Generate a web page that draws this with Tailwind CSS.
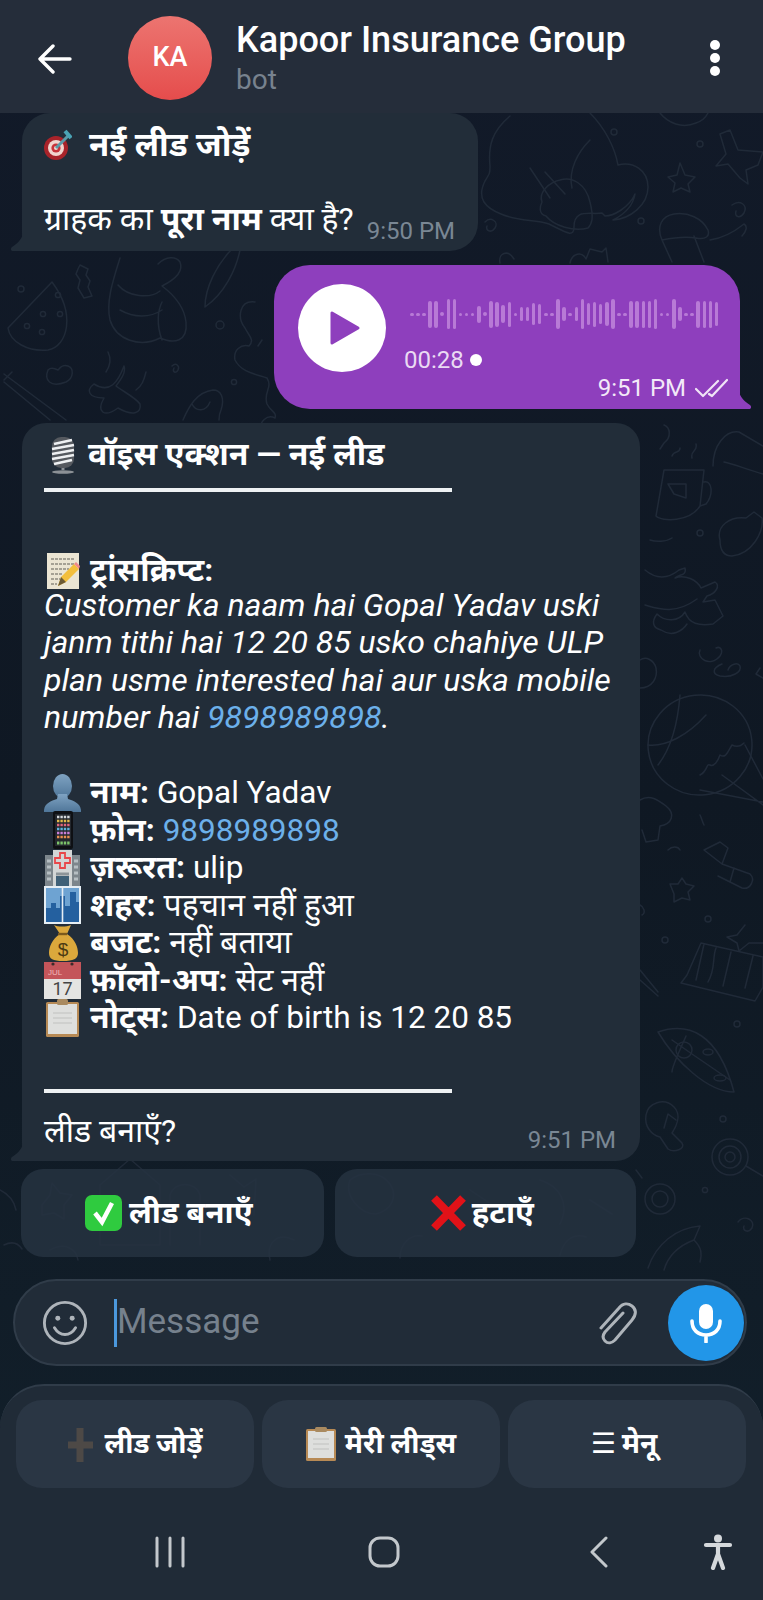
<!DOCTYPE html>
<html lang="hi">
<head>
<meta charset="UTF-8">
<title>Kapoor Insurance Group</title>
<script src="https://cdn.jsdelivr.net/npm/@tailwindcss/browser@4"></script>
</head>
<body class="bg-[#0f1821]">
<div class="relative w-[763px] h-[1600px] overflow-hidden flex flex-col text-white bg-gradient-to-b from-[#121a29] via-[#0f1823] to-[#12202b] font-['Roboto','Noto_Sans_Devanagari','Noto_Sans_CJK_SC','DejaVu_Sans',sans-serif]">

  <!-- wallpaper doodles, coordinates are page pixels -->
  <svg class="absolute left-0 top-0" width="763" height="1380" fill="none" stroke="#202a38" stroke-width="1.5" stroke-linecap="round" stroke-linejoin="round">
    <!-- top right: witch hat, stars, jar -->
    <path d="M590 113c15 15 25 35 28 52 15-4 30 5 30 22 0 18-18 32-35 33 12-6 20-14 22-26-6 14-22 22-30 22l-3-3c-12 2-28-5-28 14 0 12-10 4-25-3-14-5-30-2-48-10-15-6-25-15-16-33 5-8 5-8 5-15-2-20 2-35 20-50"/>
    <path d="M590 140c-12 12-22 30-18 48M545 172l20 22M530 168l20 30"/>
    <path d="M560 180c12-4 26 4 30 22 4 16 2 22-2 26-14 4-34-2-42-12-8-2-6-10-4-14-4-10 8-20 18-22z"/>
    <path d="M730 130l8 20 25 2-5 13-12 5 2 14-8-6-12-14-12 2 10-12-6-20zM680 163l5 12 10 2-7 7 2 8-9-4-8 4 2-9-7-6 9-2z"/>
    <path d="M660 113c8 10 22 16 36 10 6-2 10-6 12-10"/><circle cx="614" cy="132" r="3"/><circle cx="700" cy="144" r="3"/><circle cx="641" cy="221" r="3"/>
    <path d="M732 205c8-6 16 0 12 8-4 6-10 4-8-2"/><path d="M485 222c6-6 14 0 10 6-4 6-10 2-8-2"/>
    <path d="M662 240c-6-14 0-24 12-26 14-2 28 4 34 16 2 6-2 10-12 8-12-2-24 0-34 2zM662 240l10 22M694 236l10 26M710 240c14-2 24-8 34-16 4 2 2 8-2 12"/>
    <path d="M500 263c-2-10 8-14 14-4M570 263c2-10 12-12 16-4l4-10 12 3 4-4 2 14"/>
    <!-- left column under the first bubble -->
    <path d="M52 282l-44 46c2 14 20 24 40 22 20-4 28-36 4-68z"/><circle cx="27" cy="326" r="2.6"/><circle cx="43" cy="314" r="2.6"/><circle cx="60" cy="314" r="2.6"/><circle cx="58" cy="295" r="2.6"/><circle cx="42" cy="332" r="2.6"/>
    <path d="M80 265l8 4-2 6 4 6-2 6 4 9-8 2-6-10 2-8-4-6 2-5z"/><circle cx="21" cy="289" r="3"/>
    <path d="M120 258c-8 25-14 45-10 62 6 20 30 28 50 18 14 6 28 4 26-16-2-18-16-30-24-36 12-6 22-14 18-24-4-6-14-6-22 2M118 285c10 12 32 14 42 6M120 310c14 8 30 8 42 0M162 340c-6-16-4-30 0-38"/>
    <path d="M240 250c-4 20-16 44-35 57 0-20 12-42 26-57"/><circle cx="220" cy="325" r="4"/>
    <path d="M255 302c-16-2-18 16-10 26 4 8 10 12 4 18-8-2-16 4-14 14 6 12 20 14 32 18 6 10-4 14 0 26 4 8 10 8 8 14-8-4-16 4-14 12M262 340l-4 6"/><circle cx="234" cy="382" r="2.6"/>
    <path d="M48 370c-4 10 2 18 18 12 8-4 8-14 2-16-6-2-8 2-10 4-4-2-8-2-10 0zM4 374l62 46M12 372l-8 8M4 382l46 38"/>
    <path d="M108 352c4 8 2 14-2 20M124 366c-6 16-14 28-30 18-8 6-6 14 10 14-8 14 0 20 14 10 14 8 24 6 22-4-4-6-16-12-24-18 6-8 10-14 8-20zM146 372c-2 8-4 14-10 18"/>
    <path d="M172 366c4-4 8 0 6 4-2 4-6 2-4-2"/><path d="M183 420c6-14 14-28 30-30 8 0 12 8 8 20-2 4-2 8-2 10M192 404c4 8 14 8 18-2"/>
    <!-- right column beside the card -->
    <path d="M713 466c0-20 12-36 26-34l24 14M724 462c10 2 24 8 39 12"/><path d="M664 425c6 2 8 12 0 18l-4 6"/>
    <path d="M664 470h40l-4 36c-10 16-38 16-44 10zM704 482c8-2 10 12 2 22l-6 2M668 484h18v14l-12-4zM672 456c2-6 8-2 8-8M692 458c-2-8 6-6 4-14"/>
    <path d="M720 540c-4-14 10-24 26-22l8-6 8 6c2 14-10 36-30 38-10 0-12-8-12-16z"/><circle cx="700" cy="533" r="3"/>
    <path d="M650 540c6 2 16 2 22-2"/>
    <path d="M645 570c12 10 24 8 34 0l6-2c2 8-6 6-10 10 10-4 22 2 26 10l14-6c6 4 0 12-8 14l-4 6 12-2 8 16-10 8c-14 2-24 0-28-12-6 10-20 10-28 2-6 8-4 14 4 16 12 8 22 0 26-6M645 605c14 4 30 10 52-6M700 650c-4 8 10 18 20 6 4-6 0-10-4-8"/>
    <path d="M640 660c6-4 14 0 16 8 2 10-4 20-16 20"/>
    <path d="M728 670c2-6 10-8 12-4 2 6-8 12-20 10-8-2-8-8 2-12"/>
    <path d="M760 668l-4 6 7 4"/>
    <ellipse cx="700" cy="745" rx="52" ry="50" transform="rotate(-6 700 745)"/><path d="M680 695c-2 26-8 52-22 70M648 745c18 2 40-10 58-30M700 775c8-4 6-12 10-10s8-4 10-10c6 4 8-4 12-10 4 2 8 2 12-2M700 790l63 12M722 775l41 30M745 745l18 34"/>
    <path d="M640 800c10-6 18 0 26 6 10 8 6 18-6 20l-2 14-12 2-4-12"/><path d="M668 850c4-4 10-4 12 0M700 815c2 4 2 6 4 10"/><path d="M670 884l8 0 4-6 4 6 8 2-6 6 2 8-8-2-8 4 0-8z"/>
    <path d="M704 850l16-8 8 6-6 16zM722 864l28 10c6 6 0 16-8 14l-24-12M734 868l-4 14"/>
    <path d="M640 905c4 2 6 8 2 10"/><circle cx="708" cy="919" r="3"/><circle cx="665" cy="940" r="3"/>
    <path d="M745 925l-8 10-10 2 10 6 2 8 10-8 14 0"/>
    <path d="M687 975l14-32 62 14v30l-8 14-74-18zM704 944l-8 36M716 948c-4 10 0 20-8 34M731 952l-8 34M753 956l-8 32"/><path d="M640 970l18 22M640 980l18 16"/>
    <path d="M658 1032c30-10 60 0 76 60-26 0-58-30-76-60zM686 1036c-6 14-14 30-14 36M672 1040l20 14 38 26"/><circle cx="684" cy="1050" r="8"/><ellipse cx="708" cy="1052" rx="5" ry="3"/><ellipse cx="720" cy="1078" rx="6" ry="3"/>
    <circle cx="737" cy="1024" r="3"/>
    <path d="M646 1115c2-12 18-18 28-8 8 8 2 20-2 26l10 10c4 6-8 10-14 6l-8-12c-8-2-16-10-14-22zM664 1128l4-14 8 6"/>
    <circle cx="723" cy="1119" r="3"/><circle cx="730" cy="1157" r="18"/><circle cx="730" cy="1157" r="11"/><circle cx="730" cy="1157" r="5"/><path d="M746 1166l17 10"/>
    <circle cx="660" cy="1199" r="15"/><circle cx="660" cy="1199" r="8"/><circle cx="705" cy="1190" r="2.6"/><path d="M738 1222c6-8 18-2 14 6-4 6-10 2-8-2"/>
    <path d="M648 1268c8-24 28-40 52-42l-6 14c8 8 8 14 6 22M664 1270c4-14 14-24 30-30"/>
    <!-- seen through the inline buttons -->
    <path d="M42 1205l8-10 2-12 8 10 12 2-8 10 0 14-10-6-12 2zM100 1185l30-26 30 26v60h-60zM170 1245v-50c4-14 26-14 30 0v50M230 1175l14 12 12-8-2 36M50 1250c14-8 26-2 28 10M270 1260c-4-18 8-28 24-20"/>
    <path d="M350 1180c10-8 30-10 40 4 8 12 2 26-14 30-16 0-32-18-26-34zM470 1190l60 40M540 1180c20 6 30 24 20 44M590 1200l22 14M560 1255c4-16 14-22 26-18M400 1258c0-14 10-24 22-22"/>
    <path d="M0 1190c8 4 14 10 16 20M4 1245c8-4 14-2 18 4M636 1170l6 8"/>
  </svg>

  <!-- header -->
  <header class="relative z-10 h-[113px] shrink-0 bg-[#252d3a] flex items-center">
    <svg class="ml-[38px] mt-[5px]" width="34" height="30" viewBox="0 0 34 30" fill="none" stroke="#fff" stroke-width="3.4" stroke-linecap="round" stroke-linejoin="round"><path d="M2 15h30M15 2 2 15l13 13"/></svg>
    <div class="ml-[56px] mt-[2px] w-[84px] h-[84px] rounded-full bg-gradient-to-b from-[#ec7470] to-[#e54c4c] flex items-center justify-center text-[27px] font-medium">KA</div>
    <div class="ml-[24px] flex-1 self-start pt-[18px]">
      <div class="text-[36px] leading-[44px] font-medium">Kapoor Insurance Group</div>
      <div class="text-[28px] leading-[35px] text-[#78828e]">bot</div>
    </div>
    <div class="mr-[43px] mt-[2px] flex flex-col gap-[3px]">
      <i class="block w-[10px] h-[10px] rounded-full bg-white"></i><i class="block w-[10px] h-[10px] rounded-full bg-white"></i><i class="block w-[10px] h-[10px] rounded-full bg-white"></i>
    </div>
  </header>

  <!-- chat -->
  <main class="relative flex-1 flex flex-col">
    <!-- bot prompt -->
    <div class="relative ml-[22px] w-[456px] h-[138px] bg-[#222d39] rounded-[28px] rounded-bl-none">
      <svg class="absolute left-[-11px] bottom-0" width="12" height="18" viewBox="0 0 12 18"><path d="M12 0v18H2c-2 0-3-2-1-4 6-4 10-8 11-14z" fill="#222d39"/></svg>
      <div class="absolute left-[22px] top-[14px] flex items-center">
        <svg width="28" height="34" viewBox="0 0 28 34"><circle cx="12" cy="20" r="12" fill="#a8232a"/><circle cx="12" cy="20" r="8" fill="#f1d5cf"/><circle cx="12" cy="20" r="4.6" fill="#c7333a"/><circle cx="12" cy="20" r="2" fill="#f1d5cf"/><path d="M12 20 25 7" stroke="#5b9aa8" stroke-width="3"/><path d="m21 3 6 7" stroke="#4aa3b5" stroke-width="4"/></svg>
        <span class="ml-[17px] text-[33px] leading-[36px] font-bold">नई लीड जोड़ें</span>
      </div>
      <div class="absolute left-[22px] top-[88px] text-[32px] leading-[36px]">ग्राहक का <b>पूरा नाम</b> क्या है?</div>
      <div class="absolute right-[23px] bottom-[5px] text-[24px] leading-[30px] text-[#7a8794]">9:50 PM</div>
    </div>

    <!-- voice message -->
    <div class="relative self-end mr-[23px] mt-[14px] w-[466px] h-[144px] bg-[#8e3fbd] rounded-[36px] rounded-br-none">
      <svg class="absolute right-[-11px] bottom-0" width="12" height="18" viewBox="0 0 12 18"><path d="M0 0v18h10c2 0 3-2 1-4C5 10 1 6 0 0z" fill="#8e3fbd"/></svg>
      <div class="absolute left-[24px] top-[19px] w-[88px] h-[88px] rounded-full bg-white flex items-center justify-center">
        <svg class="ml-[6px]" width="32" height="36" viewBox="0 0 32 36"><path d="M3 3v30l26-15z" fill="#8e3fbd" stroke="#8e3fbd" stroke-width="3" stroke-linejoin="round"/></svg>
      </div>
      <div id="wave" class="absolute left-[136px] top-[33px] h-[32px] flex items-center gap-[2.6px]"></div>
      <div class="absolute left-[130px] top-[78px] flex items-center text-[24px] leading-[34px] text-[#eadaf3]">00:28<i class="ml-[6px] block w-[12px] h-[12px] rounded-full bg-white"></i></div>
      <div class="absolute right-[12px] bottom-[3px] flex items-center text-[24px] leading-[36px] text-[#f3e9f8]">9:51 PM
        <svg class="ml-[9px]" width="33" height="20" viewBox="0 0 33 20" fill="none" stroke="#f0e4f6" stroke-width="2.2" stroke-linecap="round" stroke-linejoin="round"><path d="m1 11 7 7L23 3M14 16l3 2L32 2"/></svg>
      </div>
    </div>

    <!-- voice action card -->
    <div class="relative ml-[22px] mt-[14px] w-[618px] h-[738px] bg-[#222d39] rounded-[24px] rounded-bl-none">
      <svg class="absolute left-[-11px] bottom-0" width="12" height="18" viewBox="0 0 12 18"><path d="M12 0v18H2c-2 0-3-2-1-4 6-4 10-8 11-14z" fill="#222d39"/></svg>
      <div class="pl-[22px] pt-[13px] text-[32px] leading-[37.3px] w-[600px]">
        <div class="flex items-center h-[37px]">
          <svg class="ml-[4px]" width="30" height="38" viewBox="0 0 30 38"><rect x="4" y="1" width="22" height="31" rx="9" fill="#55595f"/><path d="M6 8 24 4M4 13l22-4M4 18l22-4M4 23l22-4M6 28l18-4" stroke="#eef0f2" stroke-width="2.6"/><path d="M15 32v2" stroke="#8c9196" stroke-width="3"/><ellipse cx="15" cy="36" rx="11" ry="1.8" fill="#8c9196"/></svg>
          <b class="ml-[10px]">वॉइस एक्शन — नई लीड</b>
        </div>
        <div class="mt-[15px] w-[408px] h-[4px] bg-[#eef1f3]"></div>
        <div class="flex items-center h-[37px] mt-[60px]">
          <svg class="ml-[3px]" width="33" height="36" viewBox="0 0 33 36"><rect x="0" y="0" width="32" height="36" fill="#ebe5d3"/><path d="M4 6h24M4 11h24M4 16h18M4 21h12M4 26h9M4 31h6" stroke="#8f8b80" stroke-width="1.4" stroke-dasharray="3 1"/><path d="m11 33 3-9 13-13 5 5-13 13z" fill="#f3bf3c"/><path d="m27 11 2-2 4 4-1 3z" fill="#ef8a8a"/><path d="m11 33 3-9 5 5z" fill="#6b5a35"/></svg>
          <b class="ml-[10px]">ट्रांसक्रिप्ट:</b>
        </div>
        <div class="italic mt-[-2px]">Customer ka naam hai Gopal Yadav uski<br>janm tithi hai 12 20 85 usko chahiye ULP<br>plan usme interested hai aur uska mobile<br>number hai <span class="text-[#6cb0ea]">9898989898</span>.</div>
        <div class="h-[38px]"></div>
        <div class="flex items-center h-[37.5px]">
          <svg class="shrink-0" width="37" height="38" viewBox="0 0 37 38"><defs><linearGradient id="pg" x1="0" y1="0" x2="0" y2="1"><stop offset="0" stop-color="#7fa3c2"/><stop offset="1" stop-color="#4f7699"/></linearGradient></defs><ellipse cx="18.5" cy="12" rx="9.5" ry="12" fill="url(#pg)"/><path d="M14 20h9l1 5c6 2 12 4 13 11v2H0v-2c1-7 7-9 13-11z" fill="url(#pg)"/></svg>
          <span class="ml-[9px]"><b>नाम:</b> <span class="text-[31.5px]">Gopal Yadav</span></span>
        </div>
        <div class="flex items-center h-[37.5px]">
          <svg class="shrink-0" width="37" height="38" viewBox="0 0 37 38"><rect x="9" y="0" width="20" height="38" rx="2" fill="#0e1014"/><rect x="11" y="3" width="16" height="32" fill="#23272d"/><path d="M13 6h13" stroke="#d6dade" stroke-width="2.6" stroke-dasharray="2.4 1"/><path d="M13 10h13" stroke="#e2b84a" stroke-width="2.6" stroke-dasharray="2.4 1"/><path d="M13 14h13" stroke="#e0677c" stroke-width="2.6" stroke-dasharray="2.4 1"/><path d="M13 18h13" stroke="#5fb3dc" stroke-width="2.6" stroke-dasharray="2.4 1"/><path d="M13 22h13" stroke="#c87fd8" stroke-width="2.6" stroke-dasharray="2.4 1"/><path d="M13 26h13" stroke="#eb8f52" stroke-width="2.6" stroke-dasharray="2.4 1"/><path d="M13 32h13" stroke="#7cc46a" stroke-width="3" stroke-dasharray="2.4 1"/></svg>
          <span class="ml-[9px]"><b>फ़ोन:</b> <span class="text-[31.5px] text-[#6cb0ea]">9898989898</span></span>
        </div>
        <div class="flex items-center h-[37.5px]">
          <svg class="shrink-0" width="37" height="38" viewBox="0 0 37 38"><rect x="1" y="6" width="35" height="32" fill="#7d868c"/><rect x="9" y="1" width="19" height="37" fill="#d3d6d6"/><path d="M16 4h5v5h5v5h-5v5h-5v-5h-5V9h5z" fill="none" stroke="#e8474a" stroke-width="1.8"/><rect x="12" y="27" width="13" height="11" fill="#3f6077"/><path d="M12 25h13" stroke="#8d9498" stroke-width="3"/><path d="M3 12h4M3 18h4M3 24h4M3 30h4M30 12h4M30 18h4M30 24h4M30 30h4" stroke="#b6bec2" stroke-width="3"/></svg>
          <span class="ml-[9px]"><b>ज़रूरत:</b> <span class="text-[31.5px]">ulip</span></span>
        </div>
        <div class="flex items-center h-[37.5px]">
          <svg class="shrink-0" width="37" height="38" viewBox="0 0 37 38"><rect width="37" height="38" fill="#e6eef4"/><rect x="2" y="2" width="33" height="34" fill="#6ea3d2"/><path d="M2 36V22h5v-5h5v5h4V10h5v10h5V6h6v10h3v20z" fill="#24609f"/><path d="M18.5 2v34" stroke="#e6eef4" stroke-width="1.6"/></svg>
          <span class="ml-[9px]"><b>शहर:</b> पहचान नहीं हुआ</span>
        </div>
        <div class="flex items-center h-[37.5px]">
          <svg class="shrink-0 overflow-visible" width="37" height="38" viewBox="0 0 37 38"><path d="M10 1c4 2 12 2 17 0l-4 9c8 5 11 13 11 19 0 6-5 8-15 8S5 35 5 29c0-6 3-14 11-19z" fill="#dba83c"/><path d="M14 10h9" stroke="#7c5a1c" stroke-width="2.4"/><text x="19" y="32" text-anchor="middle" font-size="19" fill="#4b3a12" font-family="Liberation Sans">$</text></svg>
          <span class="ml-[9px]"><b>बजट:</b> नहीं बताया</span>
        </div>
        <div class="flex items-center h-[37.5px]">
          <svg class="shrink-0 overflow-visible" width="37" height="38" viewBox="0 0 37 38"><rect y="1" width="37" height="37" fill="#e4e4e2"/><rect y="1" width="37" height="17" fill="#c4555a"/><circle cx="9" cy="3" r="1.6" fill="#3a2a2a"/><circle cx="28" cy="3" r="1.6" fill="#3a2a2a"/><text x="4" y="14" font-size="8" fill="#f0b8b8" font-family="Liberation Sans">JUL</text><text x="18.5" y="34" text-anchor="middle" font-size="18" fill="#444" font-family="Roboto">17</text></svg>
          <span class="ml-[9px]"><b>फ़ॉलो-अप:</b> सेट नहीं</span>
        </div>
        <div class="flex items-center h-[37.5px]">
          <svg class="shrink-0" width="37" height="38" viewBox="0 0 37 38"><rect x="2" y="3" width="33" height="35" rx="1.5" fill="#b78a55"/><rect x="4" y="5" width="29" height="30" fill="#dedfdd"/><path d="M9 14h19M9 19h19M9 24h19" stroke="#cfd0ce" stroke-width="2"/><rect x="13" y="0" width="11" height="6" rx="1.5" fill="#a98a60"/></svg>
          <span class="ml-[9px]"><b>नोट्स:</b> <span class="text-[31.5px]">Date of birth is 12 20 85</span></span>
        </div>
        <div class="mt-[52px] w-[408px] h-[4px] bg-[#eef1f3]"></div>
        <div class="mt-[20px]">लीड बनाएँ?</div>
      </div>
      <div class="absolute right-[24px] bottom-[6px] text-[24px] leading-[30px] text-[#7a8794]">9:51 PM</div>
    </div>

    <!-- inline buttons -->
    <div class="ml-[21px] mt-[8px] w-[615px] flex gap-[11px]">
      <div class="flex-1 h-[88px] pr-[7px] rounded-[22px] bg-[#263341]/85 flex items-center justify-center text-[31px] font-bold">
        <svg width="37" height="36" viewBox="0 0 37 36"><rect width="37" height="36" rx="7" fill="#2fcb3f"/><path d="m10 18 7 9L27 8" fill="none" stroke="#fff" stroke-width="4.5"/></svg>
        <span class="ml-[7px]">लीड बनाएँ</span>
      </div>
      <div class="flex-1 h-[88px] pr-[6px] rounded-[22px] bg-[#263341]/85 flex items-center justify-center text-[31px] font-bold">
        <svg width="35" height="36" viewBox="0 0 35 36"><path d="M3 3l29 30M32 3 3 33" stroke="#e11218" stroke-width="8"/></svg>
        <span class="ml-[6px]">हटाएँ</span>
      </div>
    </div>

    <!-- message input -->
    <div class="relative ml-[13px] mt-[22px] w-[734px] h-[87px] rounded-full bg-[#212c38] border-2 border-[#303c49] flex items-center">
      <svg class="ml-[27px]" width="46" height="46" viewBox="0 0 48 48" fill="none" stroke="#aeb4ba" stroke-width="3"><circle cx="24" cy="24" r="21.5"/><circle cx="16.5" cy="19" r="2.6" fill="#aeb4ba" stroke="none"/><circle cx="31.5" cy="19" r="2.6" fill="#aeb4ba" stroke="none"/><path d="M13 29c3 5 7 7 11 7s8-2 11-7" stroke-linecap="round"/></svg>
      <i class="ml-[26px] block w-[3px] h-[48px] bg-[#4b98dd]"></i>
      <span class="text-[35px] text-[#76818d]">Message</span>
      <svg class="absolute left-[578px] top-[20px]" width="44" height="46" viewBox="0 0 44 46" fill="none" stroke="#aeb4ba" stroke-width="3" stroke-linecap="round" stroke-linejoin="round"><path d="M30 12 12 31c-3 4-2 7 0 9 3 3 7 2 10-1l17-20c5-6 4-11 0-14s-9-3-13 2L8 27"/></svg>
      <div class="absolute left-[653px] top-[4px] w-[76px] h-[76px] rounded-full bg-[#2296e8] flex items-center justify-center">
        <svg width="34" height="40" viewBox="0 0 34 40" fill="none" stroke="#fff" stroke-width="3.6" stroke-linecap="round"><rect x="10" y="1" width="14" height="25" rx="7" fill="#fff" stroke="none"/><path d="M3 18c0 9 6 14 14 14s14-5 14-14M17 32v7"/></svg>
      </div>
    </div>

    <!-- reply keyboard -->
    <div class="mt-[18px] flex-1 rounded-t-[44px] bg-[#202b37] border-t-2 border-[#303c49] flex flex-col">
      <div class="mt-[14px] ml-[16px] w-[730px] h-[88px] flex gap-[8px] text-[28px] font-bold">
        <div class="flex-1 rounded-[26px] bg-[#2a3644] flex items-center justify-center">
          <svg width="26" height="36" viewBox="0 0 26 36"><path d="M13 2v34M1 19h25" stroke="#4d4946" stroke-width="7"/></svg>
          <span class="ml-[11px]">लीड जोड़ें</span>
        </div>
        <div class="flex-1 rounded-[26px] bg-[#2a3644] flex items-center justify-center">
          <svg width="30" height="34" viewBox="0 0 30 34"><rect y="2" width="30" height="32" rx="1.5" fill="#b78a55"/><rect x="2" y="4" width="26" height="27" fill="#dedfdd"/><path d="M7 12h16M7 17h16M7 22h16" stroke="#cfd0ce" stroke-width="2"/><rect x="9" y="0" width="12" height="5" rx="1.5" fill="#a98a60"/></svg>
          <span class="ml-[9px]">मेरी लीड्स</span>
        </div>
        <div class="flex-1 rounded-[26px] bg-[#2a3644] flex items-center justify-center">
          <span>☰</span><span class="ml-[6px] mr-[6px]">मेनू</span>
        </div>
      </div>
      <!-- android nav -->
      <nav class="relative flex-1">
        <svg class="absolute left-[155px] top-[48px]" width="30" height="32" viewBox="0 0 30 32" fill="none" stroke="#c3c8cc" stroke-width="3" stroke-linecap="round"><path d="M2 2v28M15 2v28M28 2v28"/></svg>
        <svg class="absolute left-[368px] top-[48px]" width="32" height="32" viewBox="0 0 32 32" fill="none" stroke="#c3c8cc" stroke-width="3"><rect x="2" y="2" width="28" height="28" rx="10"/></svg>
        <svg class="absolute left-[589px] top-[48px]" width="20" height="32" viewBox="0 0 20 32" fill="none" stroke="#c3c8cc" stroke-width="3" stroke-linecap="round" stroke-linejoin="round"><path d="M17 2 3 16l14 14"/></svg>
        <svg class="absolute left-[703px] top-[46px]" width="30" height="36" viewBox="0 0 30 36"><circle cx="15" cy="4.5" r="4" fill="#d5d9dc"/><path d="M3 11h24M15 11v10M15 20l-5 14M15 20l5 14" stroke="#d5d9dc" stroke-width="4.2" fill="none" stroke-linecap="round"/></svg>
      </nav>
    </div>
  </main>
</div>
<script>
  // waveform heights, read off the voice bubble left to right
  const bars = [3,3,3,27,27,4,30,30,3,3,3,17,4,27,25,18,25,3,14,14,22,20,3,3,30,14,3,14,30,22,25,20,24,30,3,3,27,27,27,27,30,3,3,30,14,3,3,27,27,27,24]
  const wave = document.getElementById('wave')
  bars.forEach(h => {
    const b = document.createElement('i')
    b.style.cssText = 'display:block;width:3.5px;border-radius:2px;background:#b87ad6;height:' + h + 'px'
    wave.appendChild(b)
  })
</script>
</body>
</html>
